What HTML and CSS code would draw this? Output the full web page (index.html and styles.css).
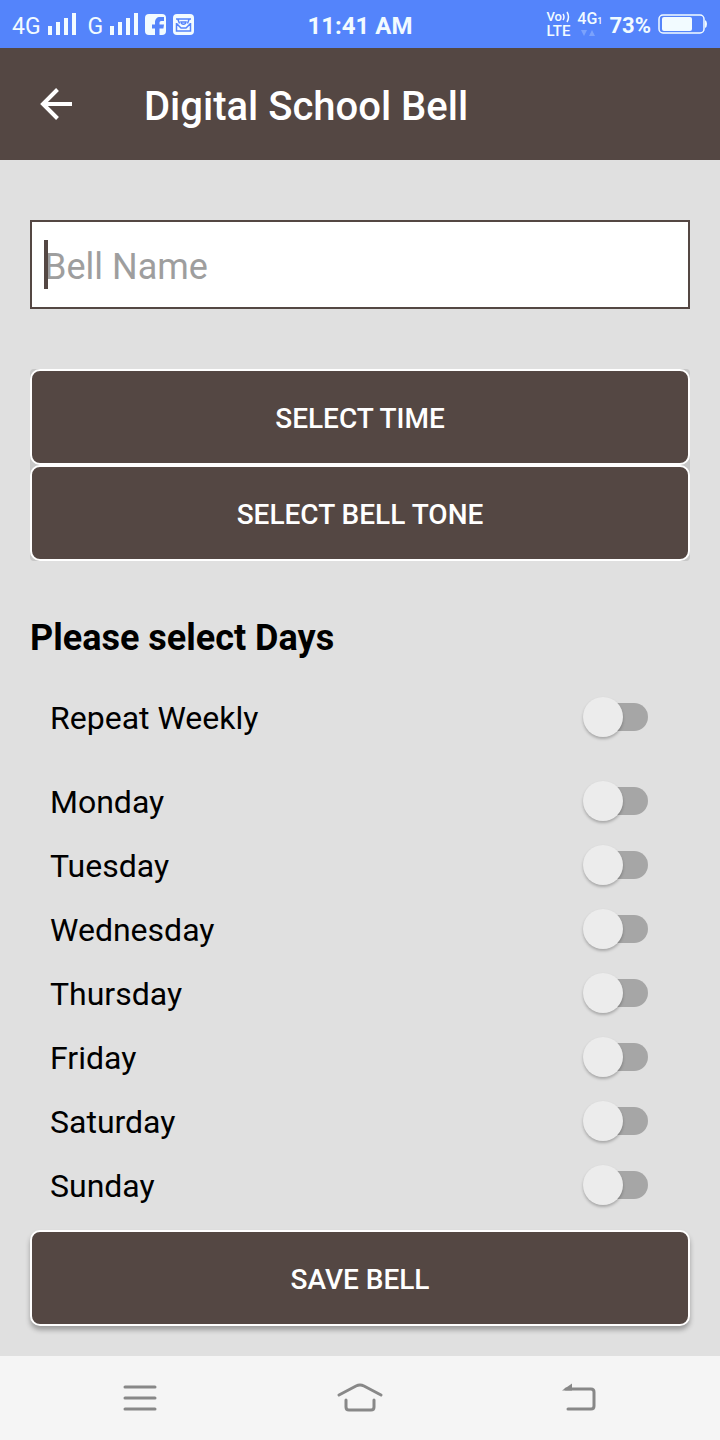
FILE: index.html
```html
<!DOCTYPE html>
<html lang="en">
<head>
  <title>Digital School Bell</title>
  <meta charset="UTF-8">
  <meta name="viewport" content="width=device-width, initial-scale=1">
  <link rel="stylesheet" href="styles.css">
</head>
<body>
  <div class="statusbar">
    <div class="status-left">
      <span class="network">4G</span>
      <svg class="signal" width="28" height="22" viewBox="0 0 28 22">
        <path d="M0 13h4v9H0zM8 9h4v13H8zM16 5h4v17h-4zM24 0h4v22h-4z"/>
      </svg>
      <span class="network second">G</span>
      <svg class="signal" width="28" height="22" viewBox="0 0 28 22">
        <path d="M0 13h4v9H0zM8 9h4v13H8zM16 5h4v17h-4zM24 0h4v22h-4z"/>
      </svg>
      <svg width="21" height="21" viewBox="0 0 21 21">
        <rect class="fill" width="21" height="21" rx="4"/>
        <path class="cutout" d="M10 21v-6.500H7v-4h3V8.500C10 5 12 3 15 3h4v4h-2.500c-1.500 0-2 .7-2 2v1.500H19l-.6 4h-3.900V21z"/>
      </svg>
      <svg width="21" height="21" viewBox="0 0 21 21">
        <rect class="fill" width="21" height="21" rx="4"/>
        <path class="cutline" d="M3 5h15M5 5.500l1.500 4M16 5.500l-1.500 4M3.500 9v8h14V9M3.500 9.500l4.500 4.500h5l4.500-4.500M8 8c.5 3 4.500 3 5 0z"/>
      </svg>
    </div>
    <div class="clock">11:41 AM</div>
    <div class="status-right">
      <div class="volte">
        <span class="vo">Vo
          <svg width="8" height="12" viewBox="0 0 8 12"><path class="line" d="M1 3q2 3 0 6M5 1q3 5 0 10"/></svg>
        </span>
        <span>LTE</span>
      </div>
      <div class="data">
        <span>4G<small>1</small></span>
        <svg width="14" height="8" viewBox="0 0 14 8"><path class="faint" d="M0 1h6L3 7zM8 7h6l-3-6z"/></svg>
      </div>
      <span class="percent">73%</span>
      <svg width="50" height="20" viewBox="0 0 50 20">
        <rect class="line" x="1" y="1" width="45" height="18" rx="4"/>
        <rect class="fill" x="4" y="3" width="30" height="14" rx="2"/>
        <path class="fill" d="M47 6q2 1 2 4t-2 4z"/>
      </svg>
    </div>
  </div>

  <header class="header">
    <button class="back" type="button" aria-label="Back">
      <svg width="32" height="32" viewBox="0 0 32 32"><path d="M32 16H3M17.500 1.500L3 16l14.500 14.500"/></svg>
    </button>
    <h1>Digital School Bell</h1>
  </header>

  <form class="content">
    <div class="field">
      <input class="bell-name" id="bell-name" type="text" placeholder="Bell Name" aria-label="Bell Name">
      <span class="caret"></span>
    </div>

    <div class="pickers">
      <button class="button" type="button">SELECT TIME</button>
      <button class="button" type="button">SELECT BELL TONE</button>
    </div>

    <h2>Please select Days</h2>
    <div class="day repeat"><label for="repeat">Repeat Weekly</label><input class="switch" type="checkbox" id="repeat"></div>
    <div class="day"><label for="monday">Monday</label><input class="switch" type="checkbox" id="monday"></div>
    <div class="day"><label for="tuesday">Tuesday</label><input class="switch" type="checkbox" id="tuesday"></div>
    <div class="day"><label for="wednesday">Wednesday</label><input class="switch" type="checkbox" id="wednesday"></div>
    <div class="day"><label for="thursday">Thursday</label><input class="switch" type="checkbox" id="thursday"></div>
    <div class="day"><label for="friday">Friday</label><input class="switch" type="checkbox" id="friday"></div>
    <div class="day"><label for="saturday">Saturday</label><input class="switch" type="checkbox" id="saturday"></div>
    <div class="day"><label for="sunday">Sunday</label><input class="switch" type="checkbox" id="sunday"></div>

    <button class="button save" type="button">SAVE BELL</button>
  </form>

  <nav class="navbar">
    <button type="button" aria-label="Menu">
      <svg width="48" height="32" viewBox="0 0 48 32"><path d="M9 5h30M9 16h30M9 27h30"/></svg>
    </button>
    <button type="button" aria-label="Home">
      <svg width="48" height="32" viewBox="0 0 48 32"><path d="M3 13L20 4q4-2 8 0l17 9M10 18v7q0 3 3 3h22q3 0 3-3v-7"/></svg>
    </button>
    <button type="button" aria-label="Return">
      <svg width="48" height="32" viewBox="0 0 48 32"><path d="M10 7h25q3 0 3 3v14q0 3-3 3H12"/><path class="tip" d="M6 8.500l10-7v7z"/></svg>
    </button>
  </nav>
</body>
</html>
```

FILE: styles.css
```css
* {
  box-sizing: border-box;
}

body {
  margin: 0;
  min-height: 100vh;
  display: flex;
  flex-direction: column;
  background-color: #e0e0e0;
  color: #000;
  font-family: Roboto, "Liberation Sans", sans-serif;
}

button {
  font-family: inherit;
  cursor: pointer;
}

svg {
  display: block;
  flex: none;
}

/* status bar */
.statusbar {
  display: grid;
  grid-template-columns: 1fr auto 1fr;
  align-items: center;
  height: 48px;
  padding: 0 12px;
  background-color: #5484fb;
  color: #f2fbff;
}

.status-left,
.status-right {
  display: flex;
  align-items: center;
  gap: 7px;
}

.status-right {
  justify-content: flex-end;
}

.network {
  font-size: 23px;
  line-height: 28px;
  padding-top: 6px;
}

.second {
  margin-left: 5px;
}

.signal,
.fill {
  fill: #f2fbff;
}

.cutout {
  fill: #5484fb;
}

.cutline {
  fill: none;
  stroke: #5484fb;
  stroke-width: 1.5;
}

.line {
  fill: none;
  stroke: #f2fbff;
  stroke-width: 1.5;
}

.faint {
  fill: #7ba2fc;
}

.clock {
  font-size: 24px;
  font-weight: bold;
  padding-top: 3px;
}

.volte {
  font-size: 15px;
  font-weight: 500;
  line-height: 14px;
}

.volte span {
  display: block;
}

.volte .vo {
  display: flex;
  align-items: center;
  font-size: 13px;
}

.data {
  font-size: 16px;
  font-weight: 500;
  line-height: 16px;
}

.data small {
  font-size: 9px;
}

.data svg {
  margin-left: 4px;
}

.percent {
  font-size: 22px;
  font-weight: bold;
  padding-top: 3px;
}

/* app header */
.header {
  display: flex;
  align-items: center;
  gap: 72px;
  height: 112px;
  padding: 0 40px;
  background-color: #544743;
  color: #fff;
}

.header h1 {
  margin: 0;
  padding-top: 4px;
  font-size: 40px;
  font-weight: 500;
}

.back {
  padding: 0;
  border: 0;
  background: none;
}

.back path {
  fill: none;
  stroke: #fff;
  stroke-width: 4;
}

/* form */
.content {
  flex: 1;
  display: flex;
  flex-direction: column;
  padding: 60px 30px 30px;
}

.field {
  position: relative;
}

.bell-name {
  display: block;
  width: 100%;
  height: 89px;
  padding: 4px 12px 0;
  border: 2px solid #544743;
  border-radius: 0;
  background-color: #fff;
  font-family: inherit;
  font-size: 36px;
  outline: none;
}

.bell-name::placeholder {
  color: #9e9e9e;
}

.caret {
  position: absolute;
  left: 14px;
  top: 20px;
  width: 4px;
  height: 49px;
  background-color: #544743;
}

.pickers {
  display: flex;
  flex-direction: column;
  margin-top: 60px;
  background-color: #c8c8c8;
  border-radius: 4px;
}

.button {
  height: 96px;
  padding: 2px 16px 0;
  border: 2px solid #fff;
  border-radius: 10px;
  background-color: #544743;
  color: #fff;
  font-size: 28px;
  font-weight: 500;
}

.content h2 {
  margin: 56px 0 26px;
  font-size: 36px;
  line-height: 42px;
  font-weight: bold;
}

.day {
  display: flex;
  align-items: center;
  justify-content: space-between;
  height: 64px;
  padding: 0 42px 0 20px;
  font-size: 32px;
}

.day label {
  padding-top: 2px;
}

.repeat {
  margin-bottom: 20px;
}

.switch {
  appearance: none;
  display: grid;
  align-items: center;
  width: 65px;
  height: 40px;
  margin: 0;
}

.switch::before,
.switch::after {
  content: "";
  grid-area: 1 / 1;
}

.switch::before {
  height: 28px;
  margin-left: 5px;
  border-radius: 14px;
  background-color: #a6a6a6;
}

.switch::after {
  width: 40px;
  height: 40px;
  border-radius: 50%;
  background-color: #ececec;
  box-shadow: 0 2px 3px rgba(0, 0, 0, 0.25);
}

.switch:checked::after {
  justify-self: end;
}

.save {
  margin-top: 13px;
  box-shadow: 0 4px 5px rgba(0, 0, 0, 0.3);
}

/* bottom navigation */
.navbar {
  display: flex;
  justify-content: space-around;
  align-items: center;
  height: 84px;
  padding: 0 30px;
  background-color: #f5f5f5;
}

.navbar button {
  padding: 0;
  border: 0;
  background: none;
}

.navbar path {
  fill: none;
  stroke: #888;
  stroke-width: 3;
  stroke-linecap: round;
}

.navbar .tip {
  fill: #888;
  stroke: none;
}
```
